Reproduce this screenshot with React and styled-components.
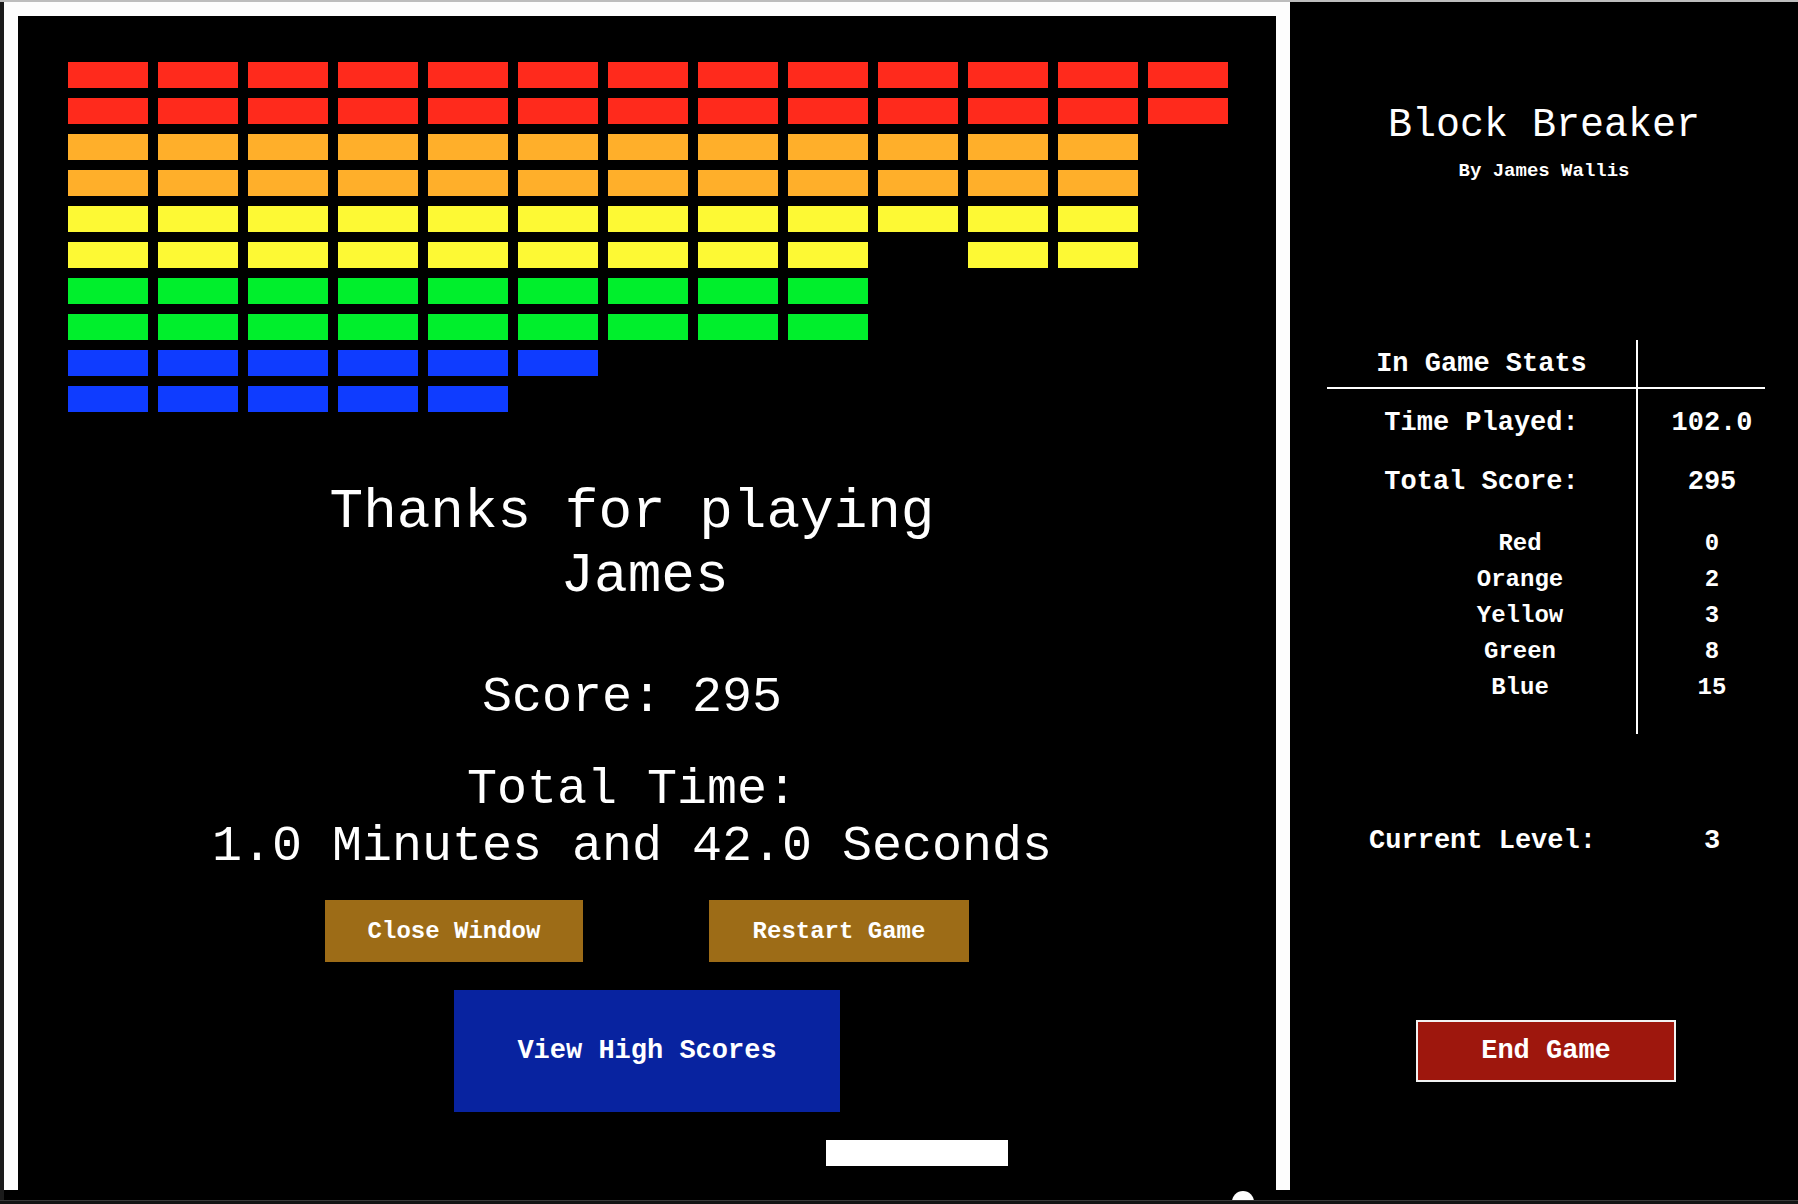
import React from 'react'
import styled, { createGlobalStyle } from 'styled-components'

const GlobalStyle = createGlobalStyle`
  html, body {
    margin:0;
    padding:0;
    background:#111;
  }
  body {
    font-family:"Courier New", "Liberation Mono", monospace;
    color:#fff;
  }
`

const BRICK_COLORS = {
    red:'#ff2a1c',
    orange:'#ffaf2a',
    yellow:'#fdf934',
    green:'#00ef2c',
    blue:'#0f3cff',
}

// which bricks are still standing, row by row (13 columns)
const ROWS = [
    { color:'red', count:13 },
    { color:'red', count:13 },
    { color:'orange', count:12 },
    { color:'orange', count:12 },
    { color:'yellow', count:12 },
    { color:'yellow', count:12, broken:[9] },
    { color:'green', count:9 },
    { color:'green', count:9 },
    { color:'blue', count:6 },
    { color:'blue', count:5 },
]

const COLOR_STATS = [
    ['Red', 0],
    ['Orange', 2],
    ['Yellow', 3],
    ['Green', 8],
    ['Blue', 15],
]

const Screen = styled.div`
    position:relative;
    width:1798px;
    height:1204px;
    box-sizing:border-box;
    overflow:hidden;
    border-top:2px solid #bdbdbd;
    background:#000;
    display:flex;
    flex-direction:column;
`

const Stage = styled.div`
    display:flex;
    height:1188px;
`

const SideStrip = styled.div`
    width:4px;
    background:#1b1b1b;
`

const GameFrame = styled.div`
    width:1286px;
    box-sizing:border-box;
    padding:14px 14px 0;
    background:#fdfdfd;
`

const Canvas = styled.div`
    position:relative;
    height:100%;
    background:#000;
    display:flex;
    flex-direction:column;
`

const BrickGrid = styled.div`
    margin:46px 0 0 50px;
    display:grid;
    grid-template-columns:repeat(13, 80px);
    grid-auto-rows:26px;
    gap:10px;
`

const Brick = styled.div`
    background:${p => p.$gone ? 'transparent' : BRICK_COLORS[p.$color]};
`

const Message = styled.div`
    margin-top:68px;
    padding-right:30px;
    display:flex;
    flex-direction:column;
    align-items:center;
    text-align:center;
    white-space:nowrap;
`

// the name line sits a little right of the first line
const Headline = styled.div`
    font-size:56px;
    line-height:64px;
    padding-left:25px;
    text-indent:-25px;
`

const StatLine = styled.div`
    font-size:50px;
    line-height:57px;
    margin-top:${p => p.$gap || 0}px;
`

const ButtonRow = styled.div`
    margin-top:25.5px;
    display:flex;
    justify-content:center;
    gap:126px;
`

const GoldButton = styled.button`
    width:${p => p.$w}px;
    height:62px;
    padding:0;
    border:none;
    background:#9d6c17;
    color:#fff;
    font-family:"Courier New", "Liberation Mono", monospace;
    font-weight:bold;
    font-size:24px;
`

const ScoresButton = styled.button`
    align-self:center;
    margin-top:28px;
    width:386px;
    height:122px;
    padding:0;
    border:none;
    background:#0823a0;
    color:#fff;
    font-family:"Courier New", "Liberation Mono", monospace;
    font-weight:bold;
    font-size:27px;
`

const Paddle = styled.div`
    position:absolute;
    left:808px;
    top:1124px;
    width:182px;
    height:26px;
    background:#fff;
`

const Ball = styled.div`
    position:absolute;
    left:1232px;
    top:1189px;
    width:22px;
    height:22px;
    border-radius:50%;
    background:#fff;
`

const Sidebar = styled.aside`
    flex:1;
    background:#000;
    display:flex;
    flex-direction:column;
    align-items:center;
    padding-top:101px;
    box-sizing:border-box;
`

const Title = styled.h1`
    margin:0;
    font-size:40px;
    line-height:45px;
    font-weight:normal;
`

const Byline = styled.p`
    margin:12px 0 0;
    font-size:19px;
    line-height:22px;
    font-weight:bold;
`

const StatsTable = styled.div`
    margin:158px 0 0 4px;
    width:438px;
    display:flex;
`

const LabelColumn = styled.div`
    width:311px;
    box-sizing:border-box;
    border-right:2px solid #fff;
    padding-bottom:29px;
`

const ValueColumn = styled.div`
    flex:1;
    padding-bottom:29px;
`

const HeaderCell = styled.div`
    height:49px;
    box-sizing:border-box;
    border-bottom:2px solid #fff;
    display:flex;
    align-items:center;
    justify-content:center;
    font-size:27px;
    font-weight:bold;
`

const Cell = styled.div`
    height:${p => p.$h}px;
    box-sizing:content-box;
    padding-top:${p => p.$top || 0}px;
    padding-left:${p => p.$indent || 0}px;
    display:flex;
    align-items:center;
    justify-content:center;
    font-size:${p => p.$small ? 24 : 27}px;
    font-weight:bold;
`

const LevelRow = styled.div`
    margin:91px 0 0 4px;
    width:438px;
    display:flex;
    font-size:27px;
    line-height:32px;
    font-weight:bold;
`

const LevelLabel = styled.div`
    width:311px;
    text-align:center;
`

const LevelValue = styled.div`
    flex:1;
    padding-left:21px;
    text-align:center;
`

const EndButton = styled.button`
    margin:163px 0 0 4px;
    width:260px;
    height:62px;
    border:2px solid #f2f2f2;
    background:#9e170d;
    color:#fff;
    font-family:"Courier New", "Liberation Mono", monospace;
    font-weight:bold;
    font-size:27px;
`

const BottomGap = styled.div`
    height:10px;
    background:linear-gradient(to right, #1b1b1b 4px, #000 4px);
`

const Footer = styled.div`
    position:relative;
    z-index:1;
    height:4px;
    box-sizing:border-box;
    border-top:1px solid #3a3a3a;
    background:#141414;
`

export default function App() {
    return (
        <Screen>
            <GlobalStyle />
            <Stage>
                <SideStrip />
                <GameFrame>
                    <Canvas>
                        <BrickGrid>
                            {ROWS.map((row, r) =>
                                Array.from({ length:13 }, (_, c) => (
                                    <Brick
                                        key={r + '-' + c}
                                        $color={row.color}
                                        $gone={c >= row.count || (row.broken || []).includes(c)}
                                    />
                                ))
                            )}
                        </BrickGrid>

                        <Message>
                            <Headline>Thanks for playing<br />James</Headline>
                            <StatLine $gap={61}>Score: 295</StatLine>
                            <StatLine $gap={34.5}>Total Time:<br />1.0 Minutes and 42.0 Seconds</StatLine>
                        </Message>

                        <ButtonRow>
                            <GoldButton $w={258}>Close Window</GoldButton>
                            <GoldButton $w={260}>Restart Game</GoldButton>
                        </ButtonRow>
                        <ScoresButton>View High Scores</ScoresButton>

                        <Paddle />
                    </Canvas>
                </GameFrame>

                <Sidebar>
                    <Title>Block Breaker</Title>
                    <Byline>By James Wallis</Byline>

                    <StatsTable>
                        <LabelColumn>
                            <HeaderCell>In Game Stats</HeaderCell>
                            <Cell $h={60} $top={4}>Time Played:</Cell>
                            <Cell $h={58}>Total Score:</Cell>
                            {COLOR_STATS.map(([name], i) => (
                                <Cell key={name} $h={36} $small $indent={77} $top={i === 0 ? 14 : 0}>{name}</Cell>
                            ))}
                        </LabelColumn>
                        <ValueColumn>
                            <HeaderCell />
                            <Cell $h={60} $top={4} $indent={21}>102.0</Cell>
                            <Cell $h={58} $indent={21}>295</Cell>
                            {COLOR_STATS.map(([name, n], i) => (
                                <Cell key={name} $h={36} $small $indent={21} $top={i === 0 ? 14 : 0}>{n}</Cell>
                            ))}
                        </ValueColumn>
                    </StatsTable>

                    <LevelRow>
                        <LevelLabel>Current Level:</LevelLabel>
                        <LevelValue>3</LevelValue>
                    </LevelRow>

                    <EndButton>End Game</EndButton>
                </Sidebar>
            </Stage>
            <BottomGap />
            <Footer />
            <Ball />
        </Screen>
    )
}
